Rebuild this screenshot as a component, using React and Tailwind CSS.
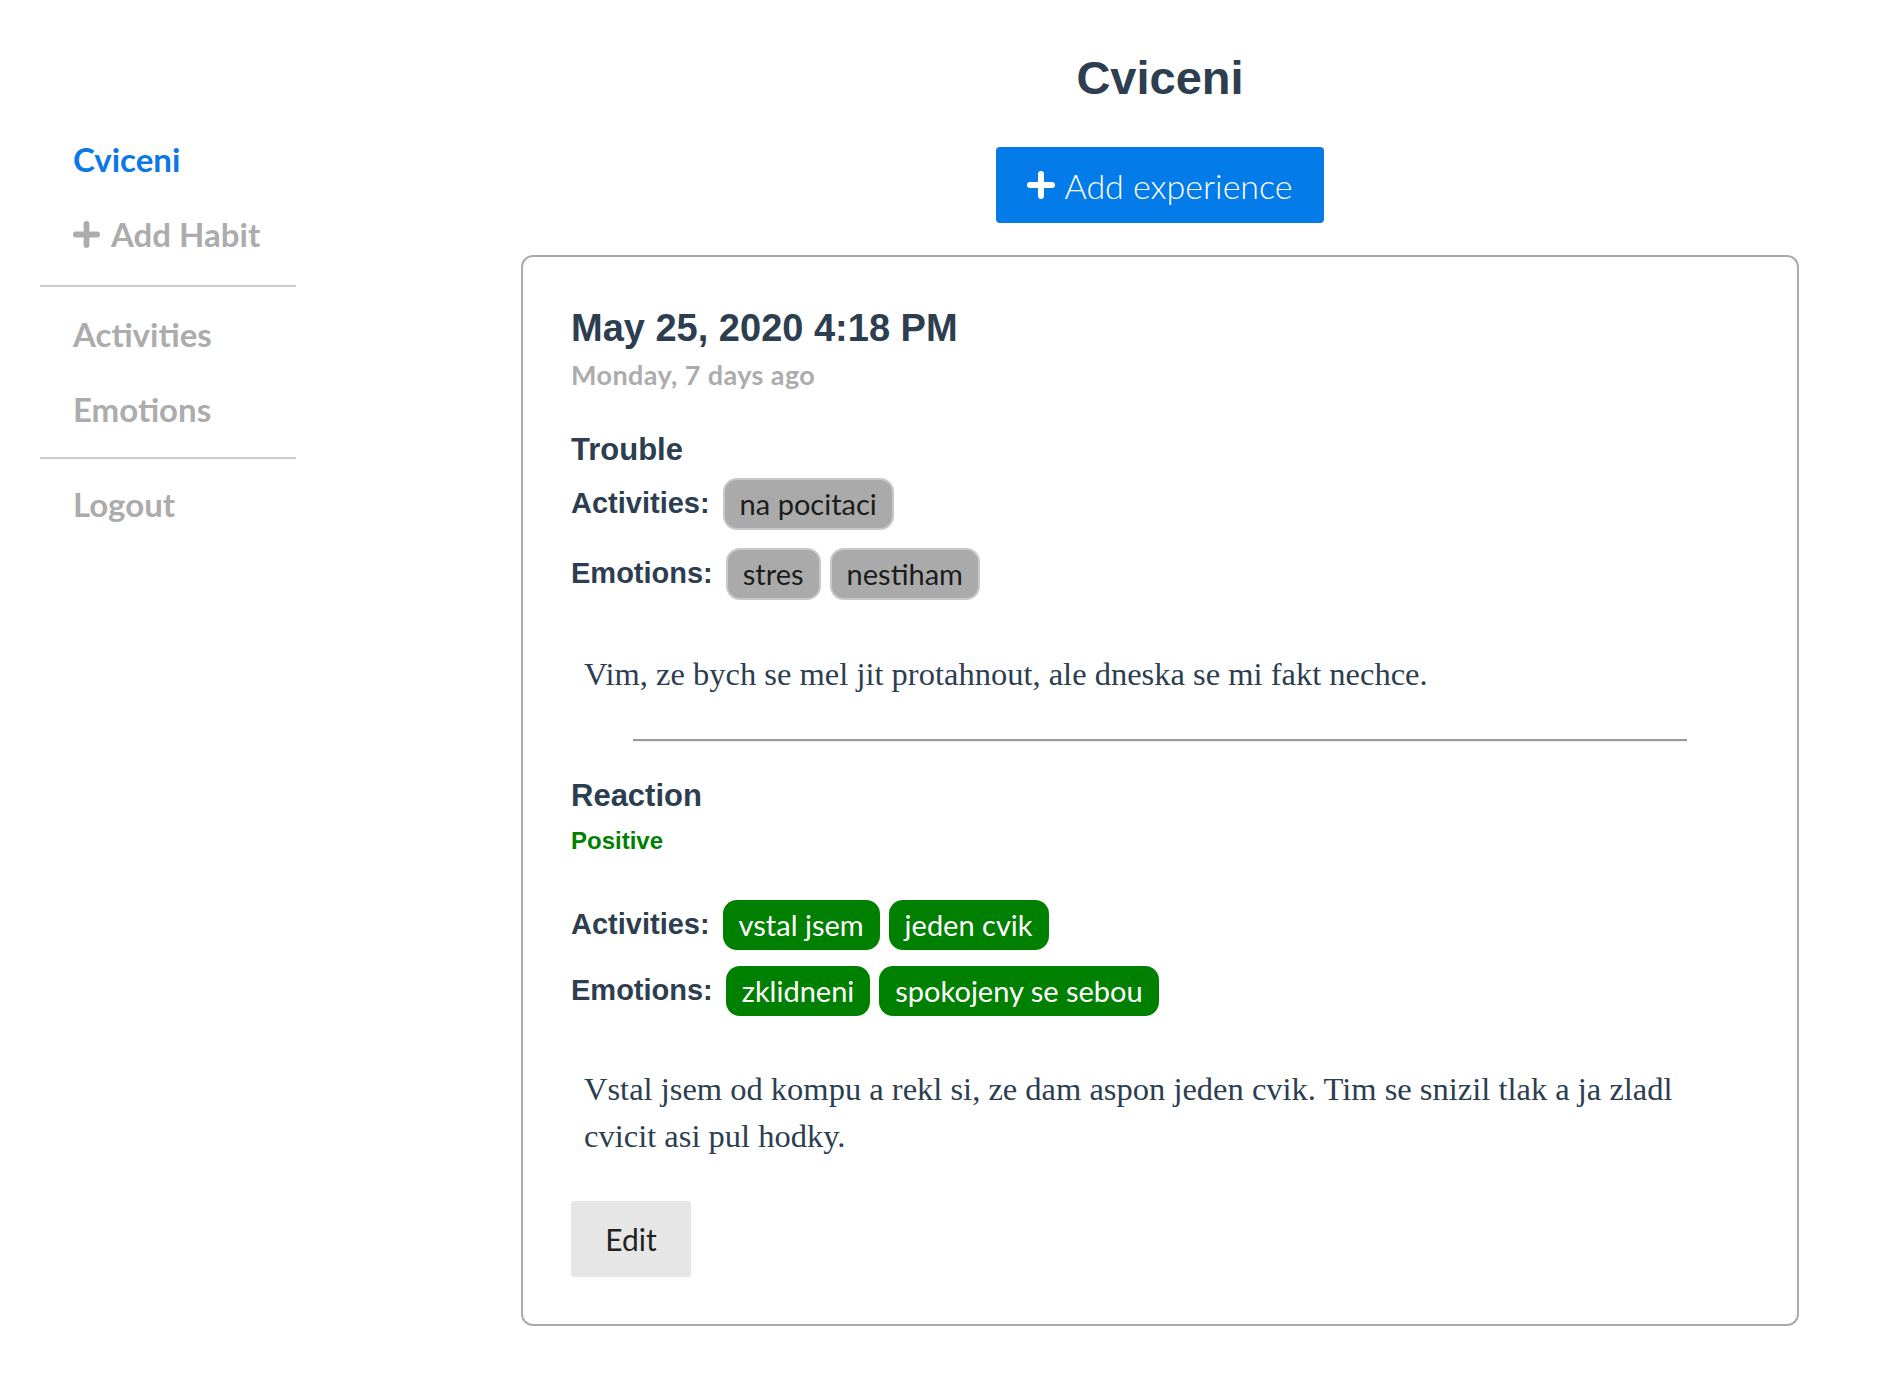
import React from "react";

const avenir = "font-['Lato','Noto_Sans',sans-serif]";
const helv = "font-['Liberation_Sans','Arial',sans-serif]";
const serif = "font-['Liberation_Serif','Times_New_Roman',serif]";

const Plus = ({ className }) => (
  <svg viewBox="0 0 28 28" className={className} fill="none">
    <path d="M14 3v22M3 14h22" stroke="currentColor" strokeWidth="6" strokeLinecap="round" />
  </svg>
);

const Tag = ({ children, tone }) =>
  tone === "trouble" ? (
    <span className="h-[52px] px-[15px] flex items-center rounded-[14px] bg-[#aaaaaa] border-2 border-[#c8c8c8] text-[29px] text-[#1c1c1c]">
      {children}
    </span>
  ) : (
    <span className="h-[50px] px-[16px] flex items-center rounded-[14px] bg-[#008000] text-[29px] text-white">
      {children}
    </span>
  );

const TagRow = ({ label, tags, tone, className }) => (
  <div className={`flex items-center ${className}`}>
    <span className={`${helv} font-bold text-[29px] text-[#2c3e50] mr-[13px]`}>{label}</span>
    <div className={`${avenir} flex items-center gap-[9px]`}>
      {tags.map((t) => (
        <Tag key={t} tone={tone}>
          {t}
        </Tag>
      ))}
    </div>
  </div>
);

const Sidebar = () => (
  <aside className={`${avenir} w-[433px] shrink-0 pl-[40px] pt-[122px]`}>
    <div className="w-[256px]">
      <div className="h-[75px] flex items-center pl-[33px] text-[33px] font-bold text-[#0a78e6]">Cviceni</div>
      <div className="h-[75px] flex items-center pl-[33px] text-[33px] font-bold text-[#acacac]">
        <Plus className="w-[27px] h-[27px] mr-[11px]" />
        Add Habit
      </div>
      <div className="mt-[13px] h-[2px] bg-[#cccccc]" />
      <div className="mt-[10px] h-[75px] flex items-center pl-[33px] text-[33px] font-bold text-[#acacac]">Activities</div>
      <div className="h-[75px] flex items-center pl-[33px] text-[33px] font-bold text-[#acacac]">Emotions</div>
      <div className="mt-[10px] h-[2px] bg-[#cccccc]" />
      <div className="mt-[8px] h-[75px] flex items-center pl-[33px] text-[33px] font-bold text-[#acacac]">Logout</div>
    </div>
  </aside>
);

export default function App() {
  return (
    <div className="min-h-screen bg-white flex">
      <Sidebar />
      <main className="flex-1 flex flex-col items-center pt-[50px]">
        <h1 className={`${helv} font-bold text-[47px] leading-[56px] text-[#2c3e50]`}>Cviceni</h1>
        <button className={`${avenir} mt-[41px] w-[328px] h-[76px] rounded-[4px] bg-[#037be8] text-white flex items-center justify-center text-[34px] font-light`}>
          <Plus className="w-[28px] h-[28px] mr-[9px]" />
          Add experience
        </button>

        <div className="mt-[32px] w-[1278px] border-2 border-[#aaaaaa] rounded-[12px] px-[48px] pt-[49px] pb-[47px]">
          <h2 className={`${helv} font-bold text-[38px] leading-[44px] text-[#2c3e50]`}>May 25, 2020 4:18 PM</h2>
          <div className={`${avenir} mt-[10px] text-[27px] tracking-[0.4px] leading-[30px] font-bold text-[#acacac]`}>Monday, 7 days ago</div>

          <h3 className={`${helv} mt-[42px] font-bold text-[31px] leading-[36px] text-[#2c3e50]`}>Trouble</h3>
          <TagRow className="mt-[10px]" label="Activities:" tags={["na pocitaci"]} tone="trouble" />
          <TagRow className="mt-[18px]" label="Emotions:" tags={["stres", "nestiham"]} tone="trouble" />
          <p className={`${serif} mt-[51px] px-[13px] text-[32.5px] leading-[47px] text-[#2c3e50]`}>
            Vim, ze bych se mel jit protahnout, ale dneska se mi fakt nechce.
          </p>

          <hr className="mt-[41px] mx-[62px] border-0 border-t-2 border-t-[#9c9c9c] border-b border-b-[#eeeeee]" />

          <h3 className={`${helv} mt-[36px] font-bold text-[31px] leading-[36px] text-[#2c3e50]`}>Reaction</h3>
          <div className={`${helv} mt-[13px] font-bold text-[24px] leading-[28px] text-[#008000]`}>Positive</div>
          <TagRow className="mt-[45px]" label="Activities:" tags={["vstal jsem", "jeden cvik"]} tone="positive" />
          <TagRow className="mt-[16px]" label="Emotions:" tags={["zklidneni", "spokojeny se sebou"]} tone="positive" />
          <p className={`${serif} mt-[50px] px-[13px] text-[32.5px] leading-[47px] text-[#2c3e50]`}>
            Vstal jsem od kompu a rekl si, ze dam aspon jeden cvik. Tim se snizil tlak a ja zladl cvicit asi pul hodky.
          </p>

          <button className={`${avenir} mt-[41px] w-[120px] h-[76px] rounded-[3px] bg-[#e6e6e6] text-[30px] text-[#222222]`}>
            Edit
          </button>
        </div>
      </main>
    </div>
  );
}
